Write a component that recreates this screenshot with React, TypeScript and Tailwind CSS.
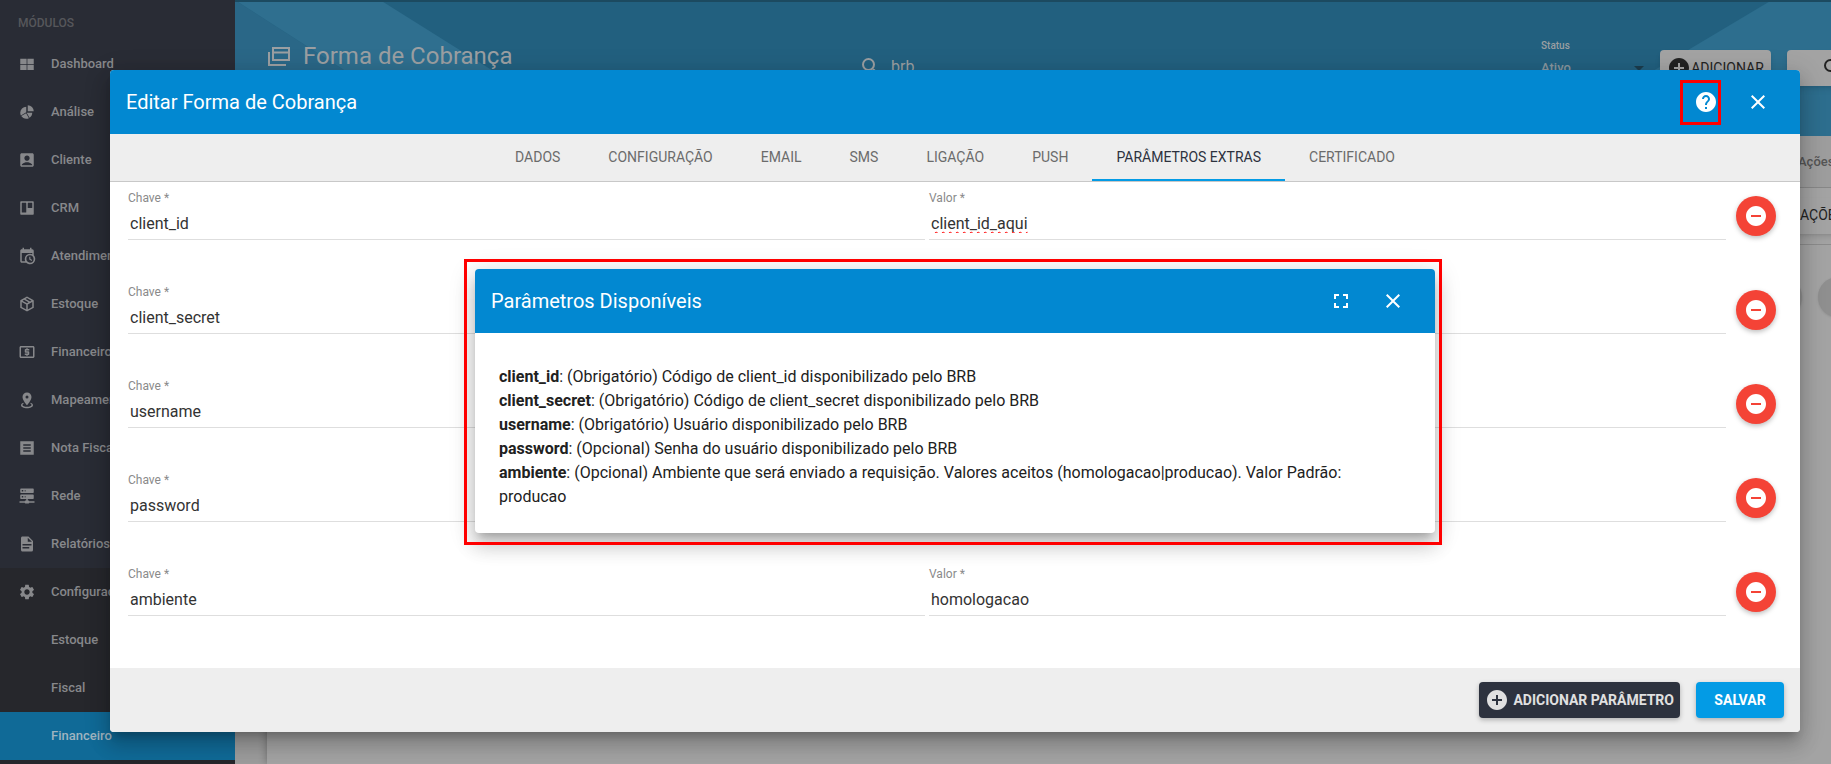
import React from "react";
import {
  MdAccountBox,
  MdAddCircle,
  MdClose,
  MdFullscreen,
  MdHelp,
  MdLocalAtm,
  MdRemoveCircle,
  MdSearch,
  MdSettings,
} from "react-icons/md";

function Glyph({ d }: { d: string }) {
  return (
    <svg viewBox="0 0 24 24" className="size-[18px]" fill="currentColor" fillRule="evenodd" aria-hidden="true">
      <path d={d} />
    </svg>
  );
}

const glyphs = {
  dashboard: "M3 5h8.5v7H3zM12.5 5H21v7h-8.5zM3 13h8.5v7H3zM12.5 13H21v7h-8.5z",
  pie: "M21,11H13V3A8,8 0 0,1 21,11M19,13C19,15.78 17.58,18.23 15.43,19.67L11.58,13H19M11,21C8.22,21 5.77,19.58 4.33,17.43L10.82,13.68L14.56,20.17C13.5,20.7 12.28,21 11,21M3,13A8,8 0 0,1 11,5V12.42L3.83,16.56C3.3,15.5 3,14.28 3,13Z",
  board:
    "M4,3H20A1,1 0 0,1 21,4V20A1,1 0 0,1 20,21H4A1,1 0 0,1 3,20V4A1,1 0 0,1 4,3M5.5,5A0.5,0.5 0 0,0 5,5.5V17.5A0.5,0.5 0 0,0 5.5,18H10.5A0.5,0.5 0 0,0 11,17.5V5.5A0.5,0.5 0 0,0 10.5,5H5.5M13.5,5A0.5,0.5 0 0,0 13,5.5V11.5A0.5,0.5 0 0,0 13.5,12H18.5A0.5,0.5 0 0,0 19,11.5V5.5A0.5,0.5 0 0,0 18.5,5H13.5Z",
  calendar:
    "M15,13H16.5V15.82L18.94,17.23L18.19,18.53L15,16.69V13M19,8H5V19H9.67C9.24,18.09 9,17.07 9,16A7,7 0 0,1 16,9C17.07,9 18.09,9.24 19,9.67V8M5,21C3.89,21 3,20.1 3,19V5C3,3.89 3.89,3 5,3H6V1H8V3H16V1H18V3H19A2,2 0 0,1 21,5V11.1C22.24,12.36 23,14.09 23,16A7,7 0 0,1 16,23C14.09,23 12.36,22.24 11.1,21H5M16,11.15A4.85,4.85 0 0,0 11.15,16C11.15,18.68 13.32,20.85 16,20.85A4.85,4.85 0 0,0 20.85,16C20.85,13.32 18.68,11.15 16,11.15Z",
  box: "M21,16.5C21,16.88 20.79,17.21 20.47,17.38L12.57,21.82C12.41,21.94 12.21,22 12,22C11.79,22 11.59,21.94 11.43,21.82L3.53,17.38C3.21,17.21 3,16.88 3,16.5V7.5C3,7.12 3.21,6.79 3.53,6.62L11.43,2.18C11.59,2.06 11.79,2 12,2C12.21,2 12.41,2.06 12.57,2.18L20.47,6.62C20.79,6.79 21,7.12 21,7.5V16.5M12,4.15L10.11,5.22L16,8.61L17.96,7.5L12,4.15M6.04,7.5L12,10.85L13.96,9.75L8.08,6.35L6.04,7.5M5,15.91L11,19.29V12.58L5,9.21V15.91M19,15.91V9.21L13,12.58V19.29L19,15.91Z",
  marker:
    "M12,2C15.31,2 18,4.66 18,7.95C18,12.41 12,19 12,19S6,12.41 6,7.95C6,4.66 8.69,2 12,2M12,6A2,2 0 0,0 10,8A2,2 0 0,0 12,10A2,2 0 0,0 14,8A2,2 0 0,0 12,6M20,19C20,21.21 16.42,23 12,23C7.58,23 4,21.21 4,19C4,17.71 5.22,16.56 7.11,15.83L7.75,16.74C6.67,17.19 6,17.81 6,18.5C6,19.88 8.69,21 12,21C15.31,21 18,19.88 18,18.5C18,17.81 17.33,17.19 16.25,16.74L16.89,15.83C18.78,16.56 20,17.71 20,19Z",
  note: "M3 3h18v18H3zM7 7v2h10V7zM7 11v2h10v-2zM7 15v2h10v-2z",
  network:
    "M13,18H14A1,1 0 0,1 15,19H22V21H15A1,1 0 0,1 14,22H10A1,1 0 0,1 9,21H2V19H9A1,1 0 0,1 10,18H11V16H4A1,1 0 0,1 3,15V11A1,1 0 0,1 4,10H20A1,1 0 0,1 21,11V15A1,1 0 0,1 20,16H13V18M4,2H20A1,1 0 0,1 21,3V7A1,1 0 0,1 20,8H4A1,1 0 0,1 3,7V3A1,1 0 0,1 4,2M9,6H10V4H9V6M9,14H10V12H9V14M5,4V6H7V4H5M5,12V14H7V12H5Z",
  document:
    "M13,9H18.5L13,3.5V9M6,2H14L20,8V20A2,2 0 0,1 18,22H6C4.89,22 4,21.1 4,20V4C4,2.89 4.89,2 6,2M15,18V16H6V18H15M18,14V12H6V14H18Z",
};

const modules: { label: string; icon: React.ReactNode }[] = [
  { label: "Dashboard", icon: <Glyph d={glyphs.dashboard} /> },
  { label: "Análise", icon: <Glyph d={glyphs.pie} /> },
  { label: "Cliente", icon: <MdAccountBox className="size-[18px]" /> },
  { label: "CRM", icon: <Glyph d={glyphs.board} /> },
  { label: "Atendimento", icon: <Glyph d={glyphs.calendar} /> },
  { label: "Estoque", icon: <Glyph d={glyphs.box} /> },
  { label: "Financeiro", icon: <MdLocalAtm className="size-[18px]" /> },
  { label: "Mapeamento", icon: <Glyph d={glyphs.marker} /> },
  { label: "Nota Fiscal", icon: <Glyph d={glyphs.note} /> },
  { label: "Rede", icon: <Glyph d={glyphs.network} /> },
  { label: "Relatórios", icon: <Glyph d={glyphs.document} /> },
];

function NavLink({ label, icon, active }: { label: string; icon?: React.ReactNode; active?: boolean }) {
  return (
    <a
      href="#"
      className={
        "flex h-12 items-center gap-[15px] pl-[18px] text-[13px] font-medium " +
        (active ? "bg-[#106a97] text-[#9fb4c0]" : "text-[#87888b]")
      }
    >
      <span className="size-[18px] shrink-0">{icon}</span>
      {label}
    </a>
  );
}

function Sidebar() {
  return (
    <aside className="flex w-[235px] shrink-0 flex-col bg-[#292c35]">
      <h2 className="flex h-10 items-center pt-1.5 pl-[18px] text-[12px] font-medium text-[#56575b]">MÓDULOS</h2>
      <nav>
        {modules.map((m) => (
          <NavLink key={m.label} {...m} />
        ))}
        <div className="bg-[#26272c]">
          <NavLink label="Configurações" icon={<MdSettings className="size-[18px]" />} />
          <NavLink label="Estoque" />
          <NavLink label="Fiscal" />
          <NavLink label="Financeiro" active />
        </div>
      </nav>
      <div className="flex-1 bg-[#26272c]" />
    </aside>
  );
}

function PageHeader() {
  return (
    <header className="relative h-[136px] bg-[#22607f]">
      <svg className="absolute inset-0 size-full" viewBox="0 0 1643 136" preserveAspectRatio="none" aria-hidden="true">
        <path d="M0 0L212 136H0z" fill="#2a6787" />
        <path d="M0 0H145L362 136H212z" fill="#2f6f8f" />
        <path d="M1537 0H1643V136H1309z" fill="#2d6e8e" />
        <path d="M0 0H1643V2H0z" fill="#1c4a60" />
      </svg>
      <div className="relative grid grid-cols-[592px_1fr_auto] items-start pl-8 text-[#9b9fa2]">
        <h1 className="flex h-[112px] items-center gap-[13px] text-[24px]">
          <svg viewBox="0 0 23 19" className="h-[19px] w-[23px]" fill="none" stroke="currentColor" strokeWidth="2" aria-hidden="true">
            <path d="M2 5v13h17" />
            <path d="M6 1h16v12H6zM6 5.5h16" />
          </svg>
          Forma de Cobrança
        </h1>
        <label className="flex h-[134px] items-center gap-2">
          <MdSearch className="size-6" aria-label="Pesquisar" />
          <input defaultValue="brb" className="w-40 bg-transparent text-[16px] outline-none" />
        </label>
        <div className="flex gap-4">
          <label className="flex w-[103px] flex-col pt-10 text-[10px] leading-3 font-medium">
            Status
            <span className="flex items-center pt-1.5 text-[#87969e]">
              <select className="flex-1 appearance-none text-[13px] leading-5 outline-none">
                <option>Ativo</option>
              </select>
              <svg viewBox="0 0 10 5" className="h-[5px] w-2.5 fill-[#1c3c4d]" aria-hidden="true">
                <path d="M0 0h10L5 5z" />
              </svg>
            </span>
          </label>
          <button
            type="button"
            className="mt-[50px] flex h-9 w-[111px] items-center justify-center rounded bg-[#a3a3a3] text-[14px] text-[#222] shadow-md"
          >
            <MdAddCircle className="size-6" />
            ADICIONAR
          </button>
          <button
            type="button"
            aria-label="Buscar"
            className="mt-[50px] flex h-9 w-[91px] items-center justify-center rounded bg-[#a3a3a3] text-[#222] shadow-md"
          >
            <MdSearch className="size-6" />
          </button>
        </div>
      </div>
    </header>
  );
}

function Background() {
  return (
    <div className="flex min-h-screen" aria-hidden="true">
      <Sidebar />
      <main className="flex min-w-0 flex-1 flex-col bg-[#9c9c9c]">
        <div className="-mr-[47px]">
          <PageHeader />
        </div>
        <div className="-mr-[47px] ml-8 flex-1 bg-[#a3a3a3] shadow-[0_0_8px_rgba(0,0,0,0.3)]">
          <table className="w-full table-fixed text-left">
            <thead>
              <tr className="h-[51px] border-b border-[#878787] bg-[#9d9d9d]">
                <th />
                <th className="w-20 text-[13px] font-medium text-[#555]">Ações</th>
              </tr>
            </thead>
            <tbody>
              <tr className="h-[57px] border-b border-[#8b8b8b]">
                <td />
                <td>
                  <button type="button" className="-ml-2 h-9 w-28 bg-[#a3a3a3] px-2.5 text-left text-[14px] text-[#222] shadow-md">
                    AÇÕES
                  </button>
                </td>
              </tr>
            </tbody>
          </table>
          <div className="flex justify-end gap-4 pt-8 pr-5">
            <span className="size-10 rounded-full bg-[#8f8f8f] shadow" />
            <span className="size-10 rounded-full bg-[#8f8f8f] shadow" />
          </div>
        </div>
      </main>
    </div>
  );
}

const tabs = ["DADOS", "CONFIGURAÇÃO", "EMAIL", "SMS", "LIGAÇÃO", "PUSH", "PARÂMETROS EXTRAS", "CERTIFICADO"];

const params = [
  { key: "client_id", value: "client_id_aqui", misspelled: true },
  { key: "client_secret", value: "" },
  { key: "username", value: "" },
  { key: "password", value: "" },
  { key: "ambiente", value: "homologacao" },
];

const help = [
  ["client_id", "(Obrigatório) Código de client_id disponibilizado pelo BRB"],
  ["client_secret", "(Obrigatório) Código de client_secret disponibilizado pelo BRB"],
  ["username", "(Obrigatório) Usuário disponibilizado pelo BRB"],
  ["password", "(Opcional) Senha do usuário disponibilizado pelo BRB"],
  [
    "ambiente",
    "(Opcional) Ambiente que será enviado a requisição. Valores aceitos (homologacao|producao). Valor Padrão: producao",
  ],
];

function Field({ label, value, misspelled }: { label: string; value: string; misspelled?: boolean }) {
  return (
    <label className="flex min-w-0 flex-1 flex-col border-b border-[#dedede] text-[12px] leading-4 text-[#8a8a8a]">
      {label} *
      <input
        defaultValue={value}
        spellCheck={false}
        className={
          "mt-0.5 h-[31px] w-full px-0.5 text-[16px] text-[#333] outline-none " +
          (misspelled
            ? "underline decoration-[#ff0000] decoration-wavy decoration-1 underline-offset-2 [text-decoration-skip-ink:none]"
            : "")
        }
      />
    </label>
  );
}

function HelpDialog() {
  return (
    <div className="absolute inset-0 flex items-center justify-center">
      <section
        role="dialog"
        aria-label="Parâmetros Disponíveis"
        className="relative w-[960px] rounded bg-white shadow-[0_7px_8px_-4px_rgba(0,0,0,0.2),0_13px_19px_2px_rgba(0,0,0,0.14),0_5px_24px_4px_rgba(0,0,0,0.12)]"
      >
        <div className="pointer-events-none absolute -top-2.5 -right-[7px] -bottom-3 -left-[11px] border-[3px] border-[#ff0000]" />
        <header className="flex h-16 items-center rounded-t bg-[#0288d1] pr-[30px] pl-4 text-white">
          <h3 className="flex-1 text-[20px]">Parâmetros Disponíveis</h3>
          <button type="button" aria-label="Tela cheia" className="mr-7">
            <MdFullscreen className="size-6" />
          </button>
          <button type="button" aria-label="Fechar">
            <MdClose className="size-6" />
          </button>
        </header>
        <div className="px-6 pt-8 pb-6 text-[16px] leading-6 text-[#212121]">
          {help.map(([name, text]) => (
            <p key={name}>
              <b className="font-bold">{name}</b>: {text}
            </p>
          ))}
        </div>
      </section>
    </div>
  );
}

export default function App() {
  return (
    <div className="relative min-h-screen overflow-hidden font-[Roboto,sans-serif]">
      <div className="absolute inset-0">
        <Background />
      </div>
      <div className="relative pt-[70px] pr-[31px] pb-8 pl-[110px]">
        <section
          role="dialog"
          aria-label="Editar Forma de Cobrança"
          className="relative rounded bg-white shadow-[0_7px_8px_-4px_rgba(0,0,0,0.2),0_13px_19px_2px_rgba(0,0,0,0.14),0_5px_24px_4px_rgba(0,0,0,0.12)]"
        >
          <header className="flex h-16 items-center rounded-t bg-[#0288d1] pr-[30px] pl-4 text-white">
            <h2 className="flex-1 text-[20px]">Editar Forma de Cobrança</h2>
            <button
              type="button"
              aria-label="Ajuda"
              className="mr-[25px] flex h-[45px] w-[41px] items-center justify-end border-[3px] border-[#ff0000]"
            >
              <MdHelp className="size-6" />
            </button>
            <button type="button" aria-label="Fechar">
              <MdClose className="size-6" />
            </button>
          </header>
          <div role="tablist" className="flex h-12 justify-center border-b border-[#c8c8c8] bg-[#eee]">
            {tabs.map((t) => {
              const active = t === "PARÂMETROS EXTRAS";
              return (
                <button
                  key={t}
                  type="button"
                  role="tab"
                  aria-selected={active}
                  className={
                    "border-b-2 px-6 pt-0.5 text-[14px] " +
                    (active ? "border-[#039be5] text-[#2d323e]" : "border-transparent text-[#6b6b6b]")
                  }
                >
                  {t}
                </button>
              );
            })}
          </div>
          <div className="pb-4">
            {params.map((p) => (
              <div key={p.key} className="flex h-[94px] items-start pt-2 pr-6 pl-[18px]">
                <div className="flex flex-1 gap-1">
                  <Field label="Chave" value={p.key} />
                  <Field label="Valor" value={p.value} misspelled={p.misspelled} />
                </div>
                <button
                  type="button"
                  aria-label={"Remover " + p.key}
                  className="mt-1.5 ml-2.5 flex size-10 items-center justify-center rounded-full bg-[#f44336] text-white shadow-[0_2px_5px_rgba(0,0,0,0.26)]"
                >
                  <MdRemoveCircle className="size-6" />
                </button>
              </div>
            ))}
          </div>
          <footer className="flex h-16 items-center justify-end gap-4 rounded-b bg-[#eee] px-4 text-[14px] font-bold">
            <button
              type="button"
              className="flex h-9 items-center gap-1 rounded bg-[#2d323e] px-1.5 text-[#e0e0e0] shadow-[0_2px_5px_rgba(0,0,0,0.26)]"
            >
              <MdAddCircle className="size-6" />
              ADICIONAR PARÂMETRO
            </button>
            <button
              type="button"
              className="h-9 w-[88px] rounded bg-[#039be5] text-white shadow-[0_2px_5px_rgba(0,0,0,0.26)]"
            >
              SALVAR
            </button>
          </footer>
          <HelpDialog />
        </section>
      </div>
    </div>
  );
}
